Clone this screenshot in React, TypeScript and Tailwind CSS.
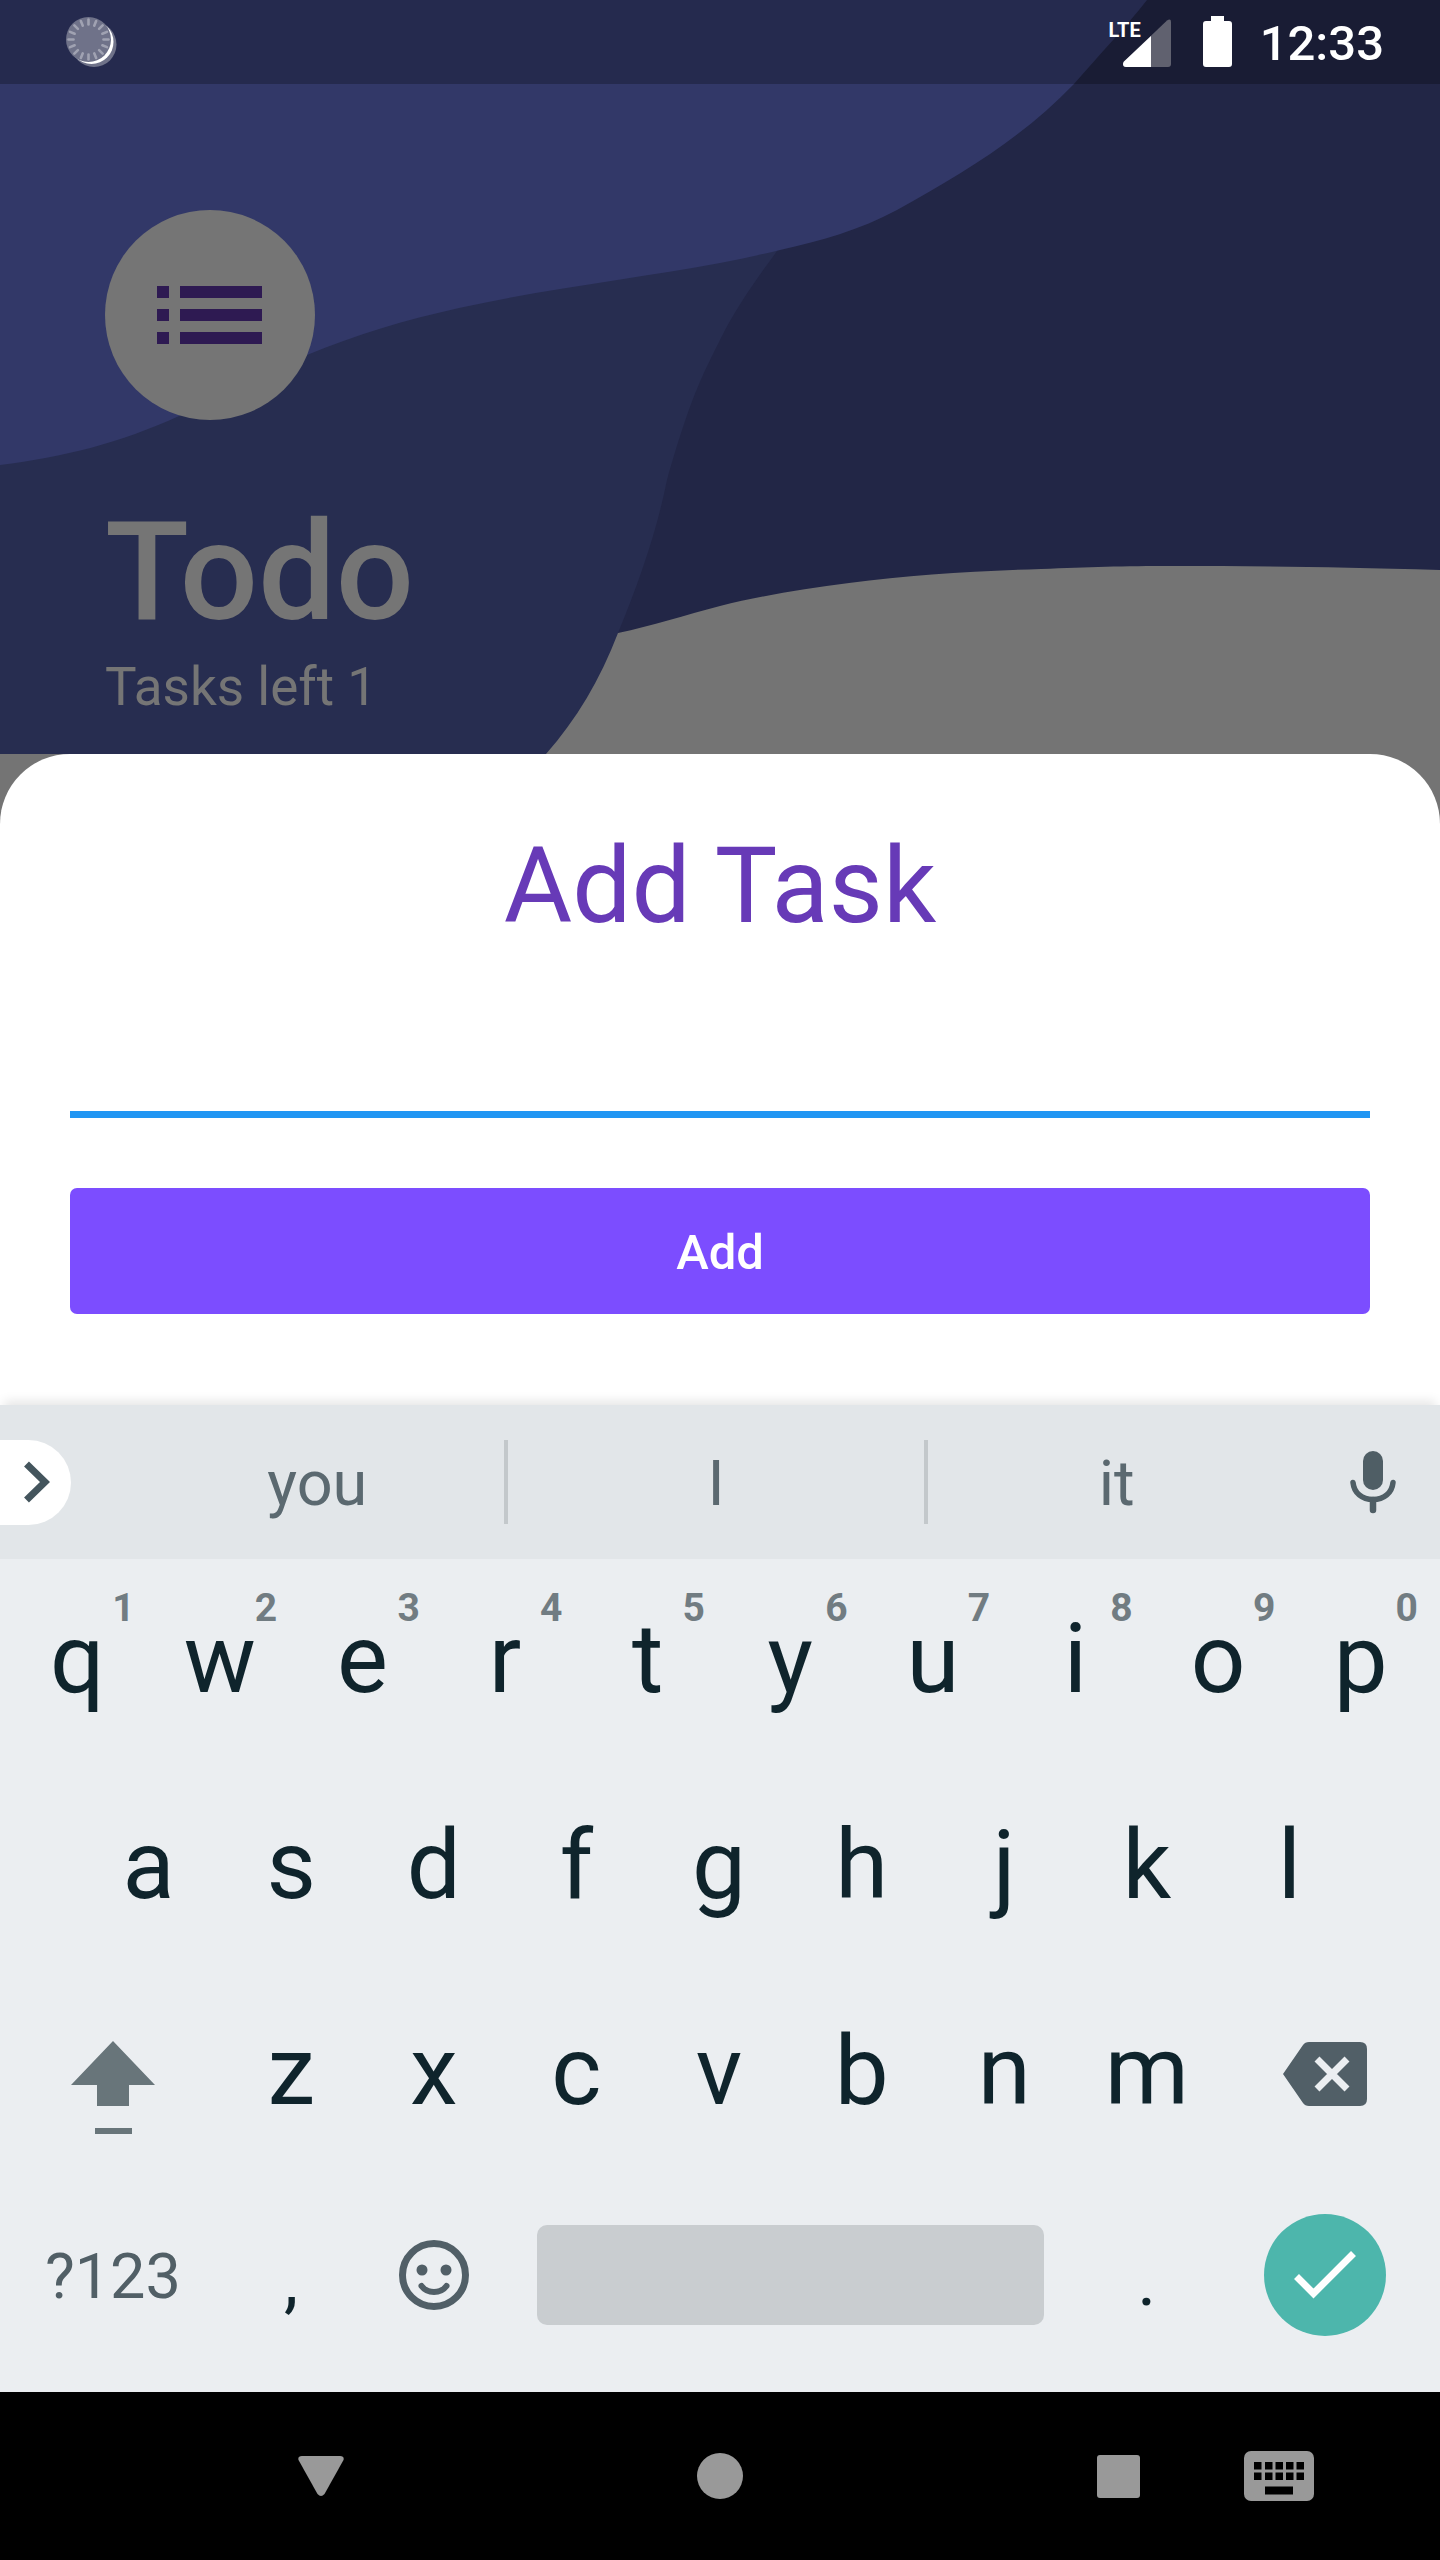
import type { ReactNode } from "react";

const topRow = [..."qwertyuiop"];
const hints = [..."1234567890"];
const homeRow = [..."asdfghjkl"];
const bottomRow = [..."zxcvbnm"];
const ticks = Array.from({ length: 16 }, (_, i) => i * 22.5);

function Waves() {
  return (
    <svg
      className="absolute inset-0 h-full w-full"
      viewBox="0 0 1440 754"
      preserveAspectRatio="none"
      aria-hidden="true"
    >
      <rect width="1440" height="754" fill="#747474" />
      <path
        fill="#222646"
        d="M600 0H1440V570C1330 567 1250 566 1175 566C1120 566 1090 567 1041 569C975 571 910 575 849 583C803 589 760 596 720 606C685 615 652 626 618 633L560 560Z"
      />
      <path
        fill="#272d50"
        d="M0 200H800L777 251C765 268 738 303 720 340C700 380 690 400 667 480C657 530 640 580 618 633C600 680 576 720 546 754H0Z"
      />
      <path
        fill="#323868"
        d="M0 0H1147C1125 28 1100 54 1074 84C1024 136 966 172 897 210C860 230 820 241 780 250C760 255 740 259 720 263C640 278 550 288 459 308C405 320 355 335 307 355C262 376 222 399 179 416C120 443 64 457 0 465Z"
      />
    </svg>
  );
}

function StatusBar() {
  return (
    <div className="relative flex h-[84px] items-center justify-between bg-black/25 pr-14 pl-16 text-white">
      <svg className="h-[56px] w-[56px]" viewBox="0 0 56 56" role="img" aria-label="Syncing">
        <circle cx="30" cy="30.500" r="22.500" fill="#6f7289" />
        <circle cx="27.500" cy="28" r="22" fill="#fff" />
        <circle cx="24.500" cy="25.500" r="22.500" fill="#6f7289" />
        <g stroke="#a0a2b2" strokeWidth="2.600" strokeLinecap="round">
          {ticks.map((a) => (
            <line key={a} x1="24.500" y1="5.500" x2="24.500" y2="10.500" transform={`rotate(${a} 24.5 25.5)`} />
          ))}
        </g>
      </svg>
      <div className="flex items-center">
        <span className="mr-[-18px] mb-6 text-[20px] leading-6 font-bold">LTE</span>
        <svg className="h-[52px] w-[48px]" viewBox="0 0 48 52" role="img" aria-label="Signal">
          <path d="M3 51Q0 51 0 48Q0 46.500 1 45.500L44 4.500Q48 2 48 6V48Q48 51 45 51Z" fill="#60616f" />
          <path d="M3 51Q0 51 0 48Q0 46.500 1 45.500L28 20V51Z" fill="#fff" />
        </svg>
        <svg className="mr-7 ml-8 h-[52px] w-[29px]" viewBox="0 0 29 52" role="img" aria-label="Battery">
          <path d="M8 0H21V5H26Q29 5 29 8V48Q29 51 26 51H3Q0 51 0 48V8Q0 5 3 5H8Z" fill="#fff" />
        </svg>
        <time className="pt-1 text-[49px] leading-[56px] font-medium">12:33</time>
      </div>
    </div>
  );
}

function Key({ label, hint }: { label: string; hint?: string }) {
  return (
    <button type="button" className="relative h-[206px] flex-1 pb-1.5 text-[96px] leading-[200px] text-[#0f242c]">
      {label}
      {hint && (
        <span className="absolute top-[26px] right-[14px] text-[39px] leading-[46px] font-bold text-[#717c82]">
          {hint}
        </span>
      )}
    </button>
  );
}

function WideKey({ label, children }: { label: string; children: ReactNode }) {
  return (
    <button type="button" aria-label={label} className="flex h-[206px] flex-[3] items-center justify-center">
      {children}
    </button>
  );
}

function Suggestions() {
  return (
    <div className="flex h-[154px] items-center bg-[#e2e6e9] text-[63px] text-[#5b6970] shadow-[0_-8px_10px_-4px_rgba(0,0,0,0.1)]">
      <div className="w-[87px]">
        <button
          type="button"
          aria-label="More tools"
          className="flex h-[85px] w-[71px] items-center justify-center rounded-r-full bg-white"
        >
          <svg className="h-[42px] w-[28px]" viewBox="0 0 28 42" fill="none" stroke="#44555d" strokeWidth="7">
            <path d="M4.500 3L23 21L4.500 39" />
          </svg>
        </button>
      </div>
      <div className="grid flex-1 grid-cols-3">
        <button type="button" className="h-[84px] border-r-4 border-[#c3c8cb] pt-1 pl-11 leading-[80px]">
          you
        </button>
        <button type="button" className="h-[84px] border-r-4 border-[#c3c8cb] pt-1 leading-[80px]">
          I
        </button>
        <button type="button" className="h-[84px] pt-1 pr-11 leading-[80px]">
          it
        </button>
      </div>
      <button type="button" aria-label="Voice input" className="w-[91px]">
        <svg className="h-[64px] w-[48px]" viewBox="0 0 48 64" fill="none" stroke="#4f5e65" strokeLinecap="round">
          <rect x="14" y="1" width="20" height="39" rx="10" fill="#4f5e65" stroke="none" />
          <path d="M4 32.500C5 43 13 49.500 24 49.500S43 43 44 32.500" strokeWidth="5.500" />
          <path d="M24 50V60" strokeWidth="6.500" />
        </svg>
      </button>
    </div>
  );
}

function Keyboard() {
  return (
    <section aria-label="Keyboard" className="bg-[#ebeef1]">
      <Suggestions />
      <div className="flex flex-col pr-2 pb-[19px] pl-1.5">
        <div className="flex">
          {topRow.map((k, i) => (
            <Key key={k} label={k} hint={hints[i]} />
          ))}
        </div>
        <div className="flex px-[5%]">
          {homeRow.map((k) => (
            <Key key={k} label={k} />
          ))}
        </div>
        <div className="flex">
          <WideKey label="Shift">
            <svg className="h-[120px] w-[84px]" viewBox="0 -27 84 120" fill="#68757a">
              <path d="M42 0L84 44H58V65H26V44H0Z" />
              <rect x="24" y="87" width="37" height="6" />
            </svg>
          </WideKey>
          <div className="flex flex-[14]">
            {bottomRow.map((k) => (
              <Key key={k} label={k} />
            ))}
          </div>
          <WideKey label="Delete">
            <svg className="h-[64px] w-[84px]" viewBox="0 0 84 64">
              <path d="M26 0H77Q84 0 84 7V57Q84 64 77 64H26Q22 64 20 61L0 32L20 3Q22 0 26 0Z" fill="#515f67" />
              <path d="M34 17L64 47M64 17L34 47" stroke="#ebeef1" strokeWidth="7" />
            </svg>
          </WideKey>
        </div>
        <div className="grid h-[196px] grid-cols-20 items-center">
          <button type="button" className="col-span-3 pt-1 text-[63px] text-[#515f66]">
            ?123
          </button>
          <button type="button" className="col-span-2 pt-3 text-[72px] text-[#0f242c]">
            ,
          </button>
          <button type="button" aria-label="Emoji" className="col-span-2 flex justify-center">
            <svg className="h-[70px] w-[70px]" viewBox="0 0 70 70" fill="none" stroke="#515f67">
              <circle cx="35" cy="35" r="31.500" strokeWidth="7" />
              <circle cx="23" cy="30" r="5.500" fill="#515f67" stroke="none" />
              <circle cx="47" cy="30" r="5.500" fill="#515f67" stroke="none" />
              <path d="M22.500 46Q27 52 35 52T47.500 46" strokeWidth="6" strokeLinecap="round" />
            </svg>
          </button>
          <div className="col-span-8 flex px-8">
            <button type="button" aria-label="Space" className="h-[100px] flex-1 rounded-[10px] bg-[#c9cdd0]" />
          </div>
          <button type="button" className="col-span-2 pt-3 text-[72px] text-[#0f242c]">
            .
          </button>
          <div className="col-span-3 flex justify-center">
            <button
              type="button"
              aria-label="Done"
              className="flex size-[122px] items-center justify-center rounded-full bg-[#4db6ac]"
            >
              <svg className="h-[48px] w-[62px]" viewBox="0 0 62 48" fill="none" stroke="#fff" strokeWidth="7">
                <path d="M2.500 25.500L19.500 42.500L59.500 2.500" />
              </svg>
            </button>
          </div>
        </div>
      </div>
    </section>
  );
}

function NavBar() {
  return (
    <nav className="grid h-[168px] grid-cols-[321px_1fr_321px] items-center bg-black">
      <button type="button" aria-label="Back" className="flex justify-end">
        <svg className="mr-[-23px] h-[42px] w-[46px]" viewBox="0 0 46 42" fill="#999">
          <path d="M4 1H42Q46.500 1 45.500 5L26.500 39Q23 43 19.500 39L0.500 5Q-0.500 1 4 1Z" />
        </svg>
      </button>
      <button type="button" aria-label="Home" className="flex justify-center">
        <span className="size-[46px] rounded-full bg-[#999]" />
      </button>
      <div className="flex items-center gap-[104px]">
        <button type="button" aria-label="Recent apps" className="ml-[-22px] size-[43px] rounded-[3px] bg-[#999]" />
        <button type="button" aria-label="Switch keyboard">
          <svg className="block h-[50px] w-[70px]" viewBox="0 0 70 50">
            <rect width="70" height="50" rx="7" fill="#999" />
            {[10, 21, 31.5, 42, 52.5].map((x) => (
              <g key={x}>
                <rect x={x} y="11" width="7.500" height="7.500" />
                <rect x={x} y="21.500" width="7.500" height="7.500" />
              </g>
            ))}
            <rect x="21" y="35.500" width="28" height="8" />
          </svg>
        </button>
      </div>
    </nav>
  );
}

export default function App() {
  return (
    <div className="flex min-h-screen flex-col bg-[#747474] font-['Roboto',sans-serif]">
      <header className="relative h-[754px] text-[#757575]">
        <Waves />
        <StatusBar />
        <div className="relative px-[105px] pt-[126px]">
          <div className="flex size-[210px] items-center justify-center rounded-full bg-[#757575]">
            <svg className="h-[58px] w-[106px]" viewBox="0 0 106 58" fill="#2e1a52" aria-hidden="true">
              {[0, 23, 46].map((y) => (
                <g key={y}>
                  <rect y={y} width="12" height="12" />
                  <rect x="23" y={y} width="82" height="12" />
                </g>
              ))}
            </svg>
          </div>
          <h1 className="mt-[70px] text-[138px] leading-[164px] font-medium">Todo</h1>
          <p className="mt-[2px] text-[53px] leading-[62px]">Tasks left 1</p>
        </div>
      </header>
      <main className="flex h-[651px] flex-col rounded-t-[70px] bg-white px-[70px] pt-[71px]">
        <h2 className="text-center text-[105px] leading-[124px] text-[#673ab7]">Add Task</h2>
        <input
          type="text"
          aria-label="Task name"
          className="mt-[34px] h-[135px] w-full border-b-[7px] border-[#2196f3] bg-transparent text-[56px] outline-none"
        />
        <button
          type="button"
          className="mt-[70px] h-[126px] w-full rounded-[7px] bg-[#7c4dff] pt-1 text-[49px] font-medium text-white"
        >
          Add
        </button>
      </main>
      <Keyboard />
      <NavBar />
    </div>
  );
}
